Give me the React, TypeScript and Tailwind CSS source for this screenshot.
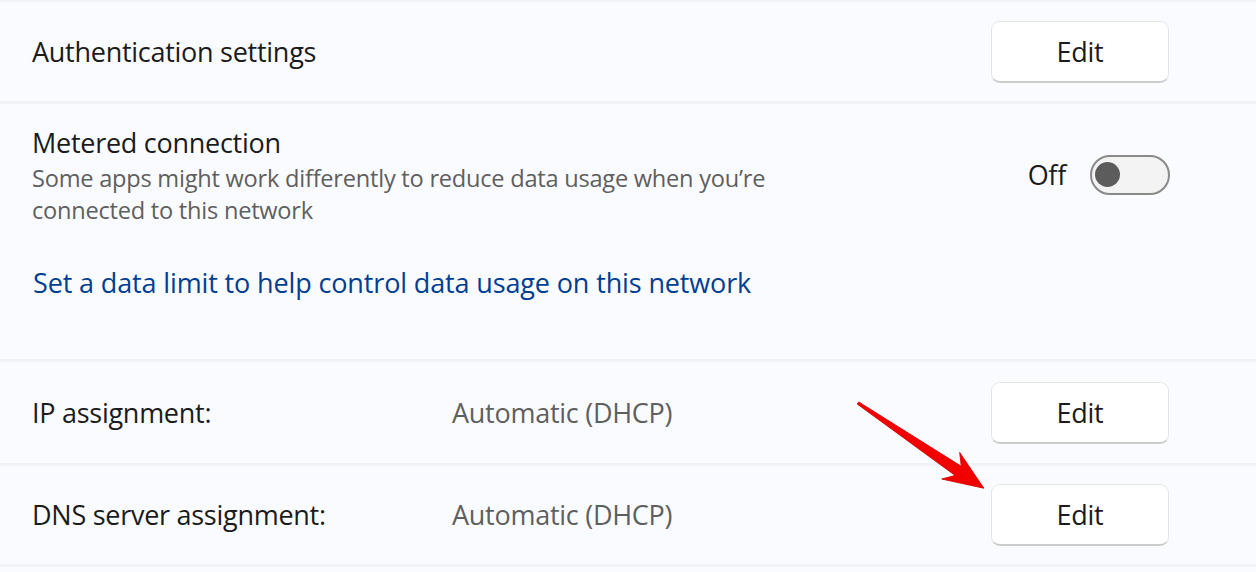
import React from "react";

const font = { fontFamily: '"Open Sans", "Noto Sans", sans-serif' } as React.CSSProperties;

function EditButton() {
  return (
    <button className="w-[178px] h-[62px] rounded-[9px] bg-white border border-[#e5e5e5] border-b-[#cccccc] border-b-2 text-[27px] tracking-[-0.01em] text-[#1b1b1b] flex items-center justify-center leading-none">
      Edit
    </button>
  );
}

function Sep() {
  return <div className="h-[3px] bg-[#f0f2f7]" />;
}

export default function App() {
  return (
    <div className="relative w-[1256px] h-[572px] bg-[#fafbfe] overflow-hidden" style={font}>
      <div className="h-[2px] bg-[#f0f2f7]" />
      {/* Authentication settings */}
      <div className="h-[99px] flex items-center justify-between pl-[32px] pr-[87px]">
        <span className="text-[27px] tracking-[-0.01em] text-[#1b1b1b] leading-[40px]">Authentication settings</span>
        <EditButton />
      </div>
      <Sep />
      {/* Metered connection */}
      <div className="h-[255px] pl-[32px] pr-[86px] pt-[19px]">
        <div className="flex items-center justify-between">
          <div className="flex flex-col">
            <span className="text-[27px] tracking-[-0.01em] text-[#1b1b1b] leading-[40px]">Metered connection</span>
            <span className="text-[23.6px] tracking-[-0.01em] text-[#5f5f5f] leading-[31.5px]">
              Some apps might work differently to reduce data usage when you’re
              <br />
              connected to this network
            </span>
          </div>
          <div className="flex items-center gap-[24px]">
            <span className="text-[27px] tracking-[-0.01em] text-[#1b1b1b] leading-[40px]">Off</span>
            <div className="w-[80px] h-[40px] rounded-full border-2 border-[#8a8a8a] bg-[#f3f3f3] flex items-center pl-[3px]">
              <div className="w-[25px] h-[25px] rounded-full bg-[#5c5c5c]" />
            </div>
          </div>
        </div>
        <div className="mt-[37px] text-[27px] tracking-[-0.005em] text-[#003e92] leading-[40px] pl-[1px]">
          Set a data limit to help control data usage on this network
        </div>
      </div>
      <Sep />
      {/* IP assignment */}
      <div className="h-[101px] flex items-center pl-[32px] pr-[87px]">
        <span className="w-[420px] text-[27px] tracking-[-0.01em] text-[#1b1b1b] leading-[40px]">IP assignment:</span>
        <span className="flex-1 text-[27px] tracking-[-0.01em] text-[#5f5f5f] leading-[40px]">Automatic (DHCP)</span>
        <EditButton />
      </div>
      <Sep />
      {/* DNS server assignment */}
      <div className="h-[98px] flex items-center pl-[32px] pr-[87px]">
        <span className="w-[420px] text-[27px] tracking-[-0.01em] text-[#1b1b1b] leading-[40px]">DNS server assignment:</span>
        <span className="flex-1 text-[27px] tracking-[-0.01em] text-[#5f5f5f] leading-[40px]">Automatic (DHCP)</span>
        <EditButton />
      </div>
      <Sep />

      {/* red annotation arrow */}
      <svg className="absolute left-0 top-0 pointer-events-none" width="1256" height="572" viewBox="0 0 1256 572">
        <g transform="translate(858,403) rotate(34.1)">
          <polygon
            points="0,-1.3 121,-5.5 112,-16 152,0 112,16 121,5.5 0,1.3"
            fill="#f20000"
            stroke="#d80000"
            strokeWidth="0.8"
            strokeLinejoin="round"
          />
        </g>
      </svg>
    </div>
  );
}
